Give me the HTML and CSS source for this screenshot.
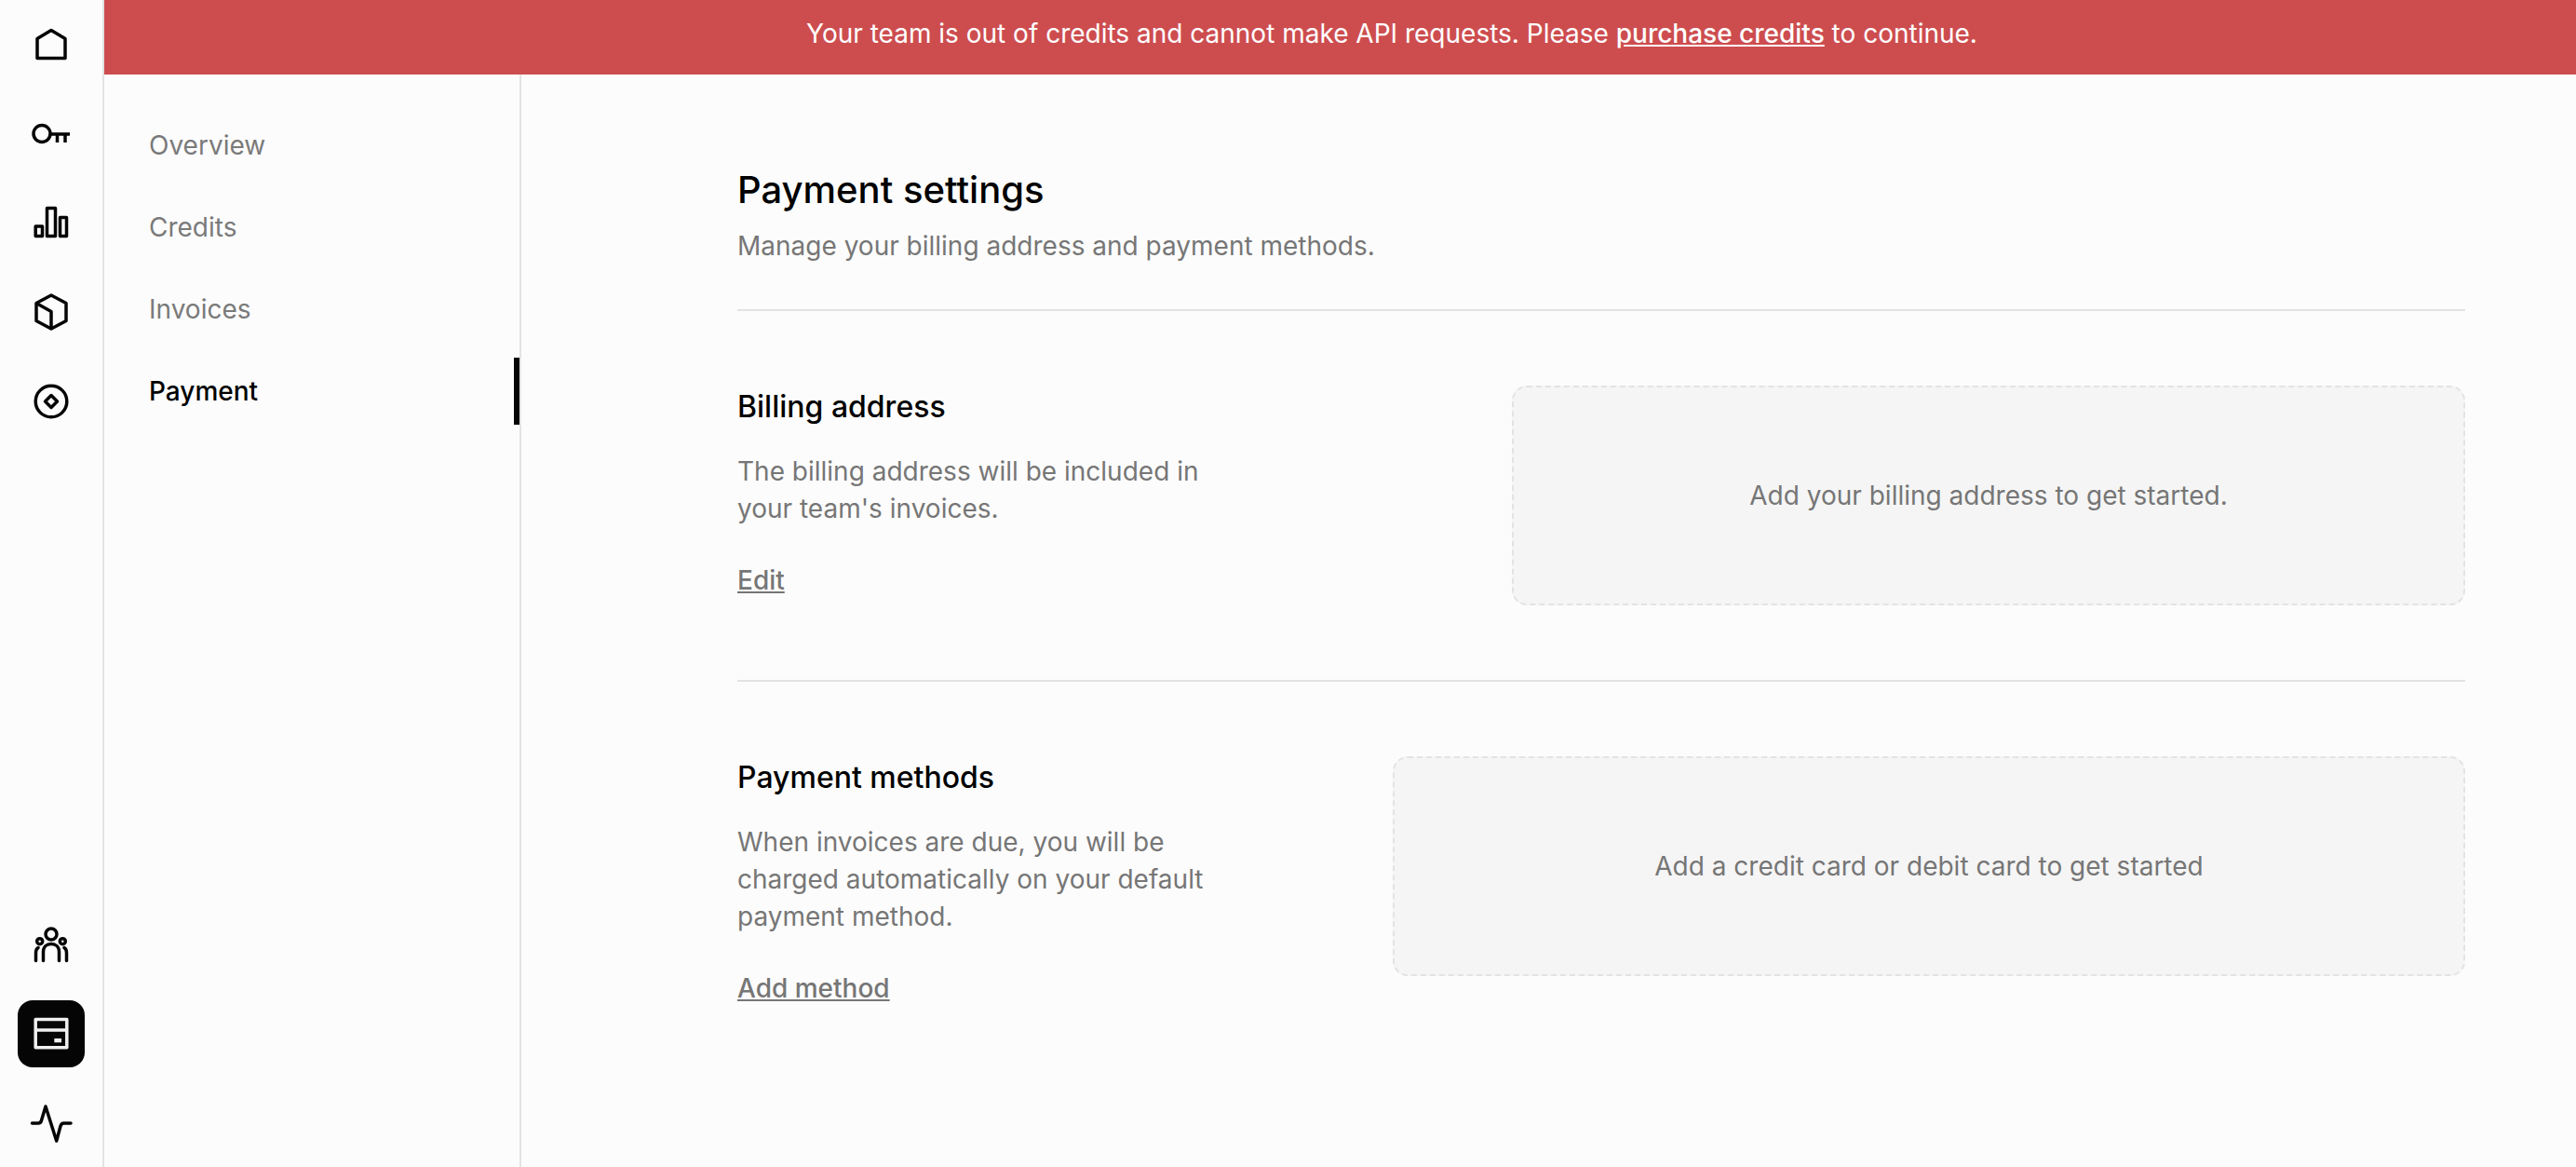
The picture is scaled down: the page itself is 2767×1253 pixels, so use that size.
FILE: index.html
```html
<!DOCTYPE html>
<html lang="en">
<head>
<meta charset="utf-8">
<title>Payment settings</title>
<link rel="stylesheet" href="styles.css">
</head>
<body>
<div class="app">
  <nav class="rail">
    <div class="rail-group">
      <a class="rail-item"><svg class="icon" viewBox="0 0 40 40"><path d="M5 35.500V14.500L20 5.500 35 14.500V35.500Z"/></svg></a>
      <a class="rail-item"><svg class="icon" viewBox="0 0 40 40"><circle cx="10" cy="20.500" r="9"/><path d="M19 21H40M26.500 21v9M35 21v9"/></svg></a>
      <a class="rail-item"><svg class="icon" viewBox="0 0 40 40"><path d="M3.200 24h7.300v10.500H3.200ZM15.500 4.500h9v30h-9ZM29.500 14.500h7v20h-7Z"/></svg></a>
      <a class="rail-item"><svg class="icon" viewBox="0 0 40 40"><path d="M20 2 36 10.500V29.500L20 38 4 29.500V10.500Z"/><path d="M4 10.500 20 19.500V38"/></svg></a>
      <a class="rail-item"><svg class="icon" viewBox="0 0 40 40"><circle cx="20" cy="20" r="16.800"/><path d="M20 13.500 26.500 20 20 26.500 13.500 20Z"/></svg></a>
    </div>
    <div class="rail-group">
      <a class="rail-item"><svg class="icon" viewBox="0 0 40 40"><circle cx="20" cy="9" r="6"/><circle cx="7.700" cy="16.700" r="3"/><circle cx="32.300" cy="16.700" r="3"/><path class="round" d="M11.500 37.500V28C11.500 22.500 15 19.500 20 19.500S28.500 22.500 28.500 28V37.500M3.500 37.500V29C3.500 26 4.500 24.500 6 23.500M36.500 37.500V29C36.500 26 35.500 24.500 34 23.500"/></svg></a>
      <a class="rail-item is-active"><svg class="icon" viewBox="0 0 40 40"><path d="M3.200 4.500h33.600v30.200H3.200ZM3.200 16h33.600"/><path class="card-chip" d="M23.300 25h7.700v4.300h-7.700Z"/></svg></a>
      <a class="rail-item"><svg class="icon icon-wide" viewBox="0 0 44 40"><path class="round" d="M1.500 20H8C10 20 11 19 11.500 17L16 2 27.700 39 32 23C32.600 21 33.500 20 35.500 20H43"/></svg></a>
    </div>
  </nav>
  <div class="main">
    <div class="banner">Your team is out of credits and cannot make API requests. Please <a>purchase credits</a> to continue.</div>
    <div class="body">
      <aside class="subnav">
        <a class="subnav-item">Overview</a>
        <a class="subnav-item">Credits</a>
        <a class="subnav-item">Invoices</a>
        <a class="subnav-item is-current">Payment</a>
      </aside>
      <main class="content">
        <header class="page-head">
          <h1>Payment settings</h1>
          <p>Manage your billing address and payment methods.</p>
        </header>
        <section class="section">
          <div class="section-info">
            <h2>Billing address</h2>
            <p>The billing address will be included in your team's invoices.</p>
            <a class="action">Edit</a>
          </div>
          <div class="empty empty-address">Add your billing address to get started.</div>
        </section>
        <section class="section">
          <div class="section-info">
            <h2>Payment methods</h2>
            <p>When invoices are due, you will be charged automatically on your default payment method.</p>
            <a class="action">Add method</a>
          </div>
          <div class="empty empty-methods">Add a credit card or debit card to get started</div>
        </section>
      </main>
    </div>
  </div>
</div>
</body>
</html>
```

FILE: styles.css
```css
* { box-sizing: border-box; }
html, body { margin: 0; height: 100%; }
body {
  font-family: Inter, "Liberation Sans", sans-serif;
  background: #fcfcfc;
  color: #000;
  font-size: 28px;
  overflow: hidden;
}
.app { display: flex; height: 1253px; }
.rail {
  width: 112px;
  flex: none;
  border-right: 2px solid #e3e3e3;
  display: flex;
  flex-direction: column;
  justify-content: space-between;
  padding: 11px 0;
}
.rail-group { display: flex; flex-direction: column; align-items: center; gap: 24px; }
.rail-item {
  width: 72px;
  height: 72px;
  border-radius: 16px;
  display: flex;
  align-items: center;
  justify-content: center;
  color: #050505;
}
.rail-item.is-active { background: #050505; color: #f0f0f0; }
.icon { width: 40px; height: 40px; fill: none; stroke: currentColor; stroke-width: 3.5; stroke-linejoin: round; overflow: visible; }
.icon-wide { width: 44px; }
.round { stroke-linecap: round; stroke-linejoin: round; }
.card-chip { fill: currentColor; stroke: none; }
.main { flex: 1; min-width: 0; display: flex; flex-direction: column; }
.banner {
  height: 80px;
  flex: none;
  background: #cd4d4f;
  color: #fff;
  line-height: 72px;
  text-align: center;
  padding-left: 111px;
}
.banner a { text-decoration: underline; font-weight: 500; }
.body { flex: 1; display: flex; min-height: 0; }
.subnav {
  width: 448px;
  flex: none;
  border-right: 2px solid #e3e3e3;
  padding-top: 32px;
  display: flex;
  flex-direction: column;
}
.subnav-item {
  height: 88px;
  display: flex;
  align-items: center;
  padding-left: 48px;
  color: #7a7a7a;
  position: relative;
}
.subnav-item.is-current { color: #000; font-weight: 500; }
.subnav-item.is-current::after {
  content: "";
  position: absolute;
  right: 0;
  top: 8px;
  width: 6px;
  height: 72px;
  background: #050505;
}
.content { flex: 1; min-width: 0; padding: 96px 119px 0 232px; }
.page-head { padding-bottom: 47px; border-bottom: 2px solid #e3e3e3; }
h1 { margin: 0; font-size: 40px; font-weight: 500; line-height: 56px; }
.page-head p { margin: 11px 0 0; line-height: 42px; color: #767676; }
.section { display: flex; justify-content: space-between; padding: 80px 0; border-bottom: 2px solid #e3e3e3; }
.section:last-child { border-bottom: 0; }
.section-info { width: 520px; flex: none; }
h2 { margin: 0; font-size: 32px; font-weight: 500; line-height: 46px; }
.section-info p { margin: 26px 0 0; line-height: 40px; color: #767676; }
.action { display: inline-block; margin-top: 36px; line-height: 42px; color: #767676; text-decoration: underline; font-weight: 500; }
.empty {
  height: 236px;
  background: #f5f5f5;
  border: 2px dashed #e3e3e3;
  border-radius: 16px;
  display: flex;
  align-items: center;
  justify-content: center;
  color: #767676;
}
.empty-address { width: 1024px; }
.empty-methods { width: 1152px; }
```
